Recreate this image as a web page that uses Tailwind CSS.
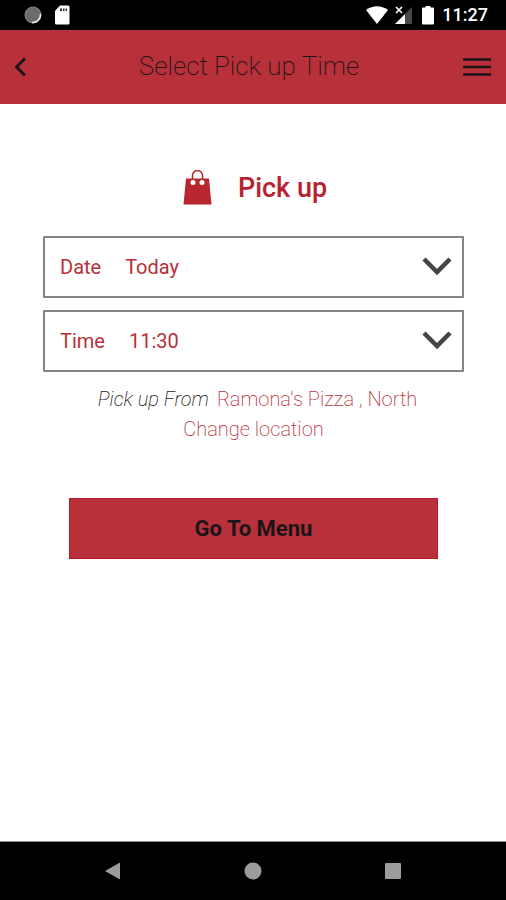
<!DOCTYPE html>
<html lang="en">
<head>
<meta charset="utf-8">
<meta name="viewport" content="width=device-width, initial-scale=1">
<title>Select Pick up Time</title>
<script src="https://cdn.jsdelivr.net/npm/@tailwindcss/browser@4"></script>
</head>
<body class="flex min-h-screen flex-col bg-white font-['Roboto',sans-serif] text-[#b8303a]">
  <!-- Status bar -->
  <div class="flex h-[30px] items-center bg-black pr-[18px] pl-6 text-white">
    <svg class="h-[18px] w-[18px]" viewBox="0 0 18 18" aria-hidden="true"><circle cx="9" cy="9" r="8" fill="#6b6b6b" stroke="#888" stroke-width="1"/><path d="M16.500 8A8 8 0 0 1 8 16.500" fill="none" stroke="#eee" stroke-width="1.500"/></svg>
    <svg class="ml-3 h-5 w-4" viewBox="0 0 16 20" aria-hidden="true"><path d="M6 .5H14a1.500 1.500 0 0 1 1.500 1.500V18a1.500 1.500 0 0 1-1.500 1.500H2.500A1.500 1.500 0 0 1 1 18V6Z" fill="#fff"/><path d="M6 3.500h2v2.500h-2zM9 3.500h1.500v2.500H9zM11.500 3.500h1.500v2.500h-1.500z" fill="#333"/></svg>
    <svg class="ml-auto h-[18px] w-[22px]" viewBox="0 0 22 18" aria-hidden="true"><path d="M0 4Q11-3.500 22 4L11 18Z" fill="#fff"/></svg>
    <svg class="ml-[7px] h-[18px] w-[18px]" viewBox="0 0 18 18" aria-hidden="true"><path d="M10 8V18H0Z" fill="#fff"/><path d="M17 1V18H10V8Z" fill="#484848"/><path d="M1 1 7 7M7 1 1 7" stroke="#fff" stroke-width="1.700"/></svg>
    <svg class="ml-[9px] h-5 w-3" viewBox="0 0 12 20" aria-hidden="true"><path d="M3.500 1h5v1.500H11a1 1 0 0 1 1 1V18.500a1 1 0 0 1-1 1H1a1 1 0 0 1-1-1V3.500a1 1 0 0 1 1-1H3.500Z" fill="#fff"/></svg>
    <span class="ml-2 text-lg leading-none font-medium">11:27</span>
  </div>

  <header class="flex h-[74px] items-center justify-between bg-[#b8303a] text-[#1c1518]">
    <button type="button" aria-label="Back" class="flex h-12 w-12 items-center pl-[13px]">
      <svg class="h-5 w-[14px]" viewBox="0 0 14 20" fill="none" stroke="currentColor" stroke-width="3" aria-hidden="true"><path d="M12 1.500 3.500 10 12 18.500"/></svg>
    </button>
    <h1 class="pb-[2px] text-[26px] leading-8 font-extralight">Select Pick up Time</h1>
    <button type="button" aria-label="Menu" class="flex h-12 w-14 items-center justify-end pr-[15px]">
      <svg class="h-5 w-7" viewBox="0 0 28 20" fill="none" stroke="currentColor" stroke-width="2.600" aria-hidden="true"><path d="M0 2.500H28M0 10H28M0 17.500H28"/></svg>
    </button>
  </header>

  <main class="flex grow flex-col pr-[42px] pl-[43px] pt-16">
    <div class="flex h-10 items-center justify-center gap-[26px] pl-[3px]">
      <svg class="h-9 w-[29px]" viewBox="0 0 29 36" aria-hidden="true"><path d="M3 8.500H26L28.500 34.500H.5Z" fill="#b8262f"/><circle cx="10" cy="12.500" r="2.500" fill="#fff"/><circle cx="19" cy="12.500" r="2.500" fill="#fff"/><path d="M9.500 10V5.500a5 5 0 0 1 10 0V10" fill="none" stroke="#b8262f" stroke-width="1.500"/></svg>
      <h2 class="text-[27px] leading-8 font-medium text-[#b8222e]">Pick up</h2>
    </div>

    <form class="mt-7 flex flex-col gap-3">
      <div class="relative flex h-[62px] items-center rounded-[1px] border-2 border-[#858585] text-xl text-[#b8303a]">
        <label for="date" class="pl-[15px]">Date</label>
        <select id="date" class="h-full grow appearance-none bg-transparent pl-6"><option>Today</option></select>
        <svg class="pointer-events-none absolute right-[10px] h-5 w-[30px]" viewBox="0 0 30 20" fill="none" stroke="#444" stroke-width="4.500" aria-hidden="true"><path d="M2 2 15 15 28 2"/></svg>
      </div>
      <div class="relative flex h-[62px] items-center rounded-[1px] border-2 border-[#858585] text-xl text-[#b8303a]">
        <label for="time" class="pl-[15px]">Time</label>
        <select id="time" class="h-full grow appearance-none bg-transparent pl-6"><option>11:30</option></select>
        <svg class="pointer-events-none absolute right-[10px] h-5 w-[30px]" viewBox="0 0 30 20" fill="none" stroke="#444" stroke-width="4.500" aria-hidden="true"><path d="M2 2 15 15 28 2"/></svg>
      </div>
    </form>

    <div class="mt-3 flex flex-col items-center text-xl leading-[30px] font-extralight">
      <p class="flex gap-2 pl-2"><em class="text-[#222]">Pick up From</em><span>Ramona's Pizza , North</span></p>
      <a href="#">Change location</a>
    </div>

    <button type="button" class="mx-[26px] mt-[54px] h-[61px] border border-[#b8182a] bg-[#b8303a] text-[22px] leading-7 font-bold text-[#1c1518]">Go To Menu</button>
  </main>

  <nav aria-label="System" class="flex h-[59px] items-center justify-center border-t border-[#888] bg-black">
    <button type="button" aria-label="Back" class="flex h-12 w-[140px] items-center justify-center"><svg class="h-[18px] w-[18px]" viewBox="0 0 18 18" aria-hidden="true"><path d="M1 9 16 .5V17.500Z" fill="#9c9c9c"/></svg></button>
    <button type="button" aria-label="Home" class="flex h-12 w-[140px] items-center justify-center"><svg class="h-[18px] w-[18px]" viewBox="0 0 18 18" aria-hidden="true"><circle cx="9" cy="9" r="8.500" fill="#9c9c9c"/></svg></button>
    <button type="button" aria-label="Recent apps" class="flex h-12 w-[140px] items-center justify-center"><svg class="h-4 w-4" viewBox="0 0 16 16" aria-hidden="true"><rect width="16" height="16" rx="1" fill="#9c9c9c"/></svg></button>
  </nav>
</body>
</html>
